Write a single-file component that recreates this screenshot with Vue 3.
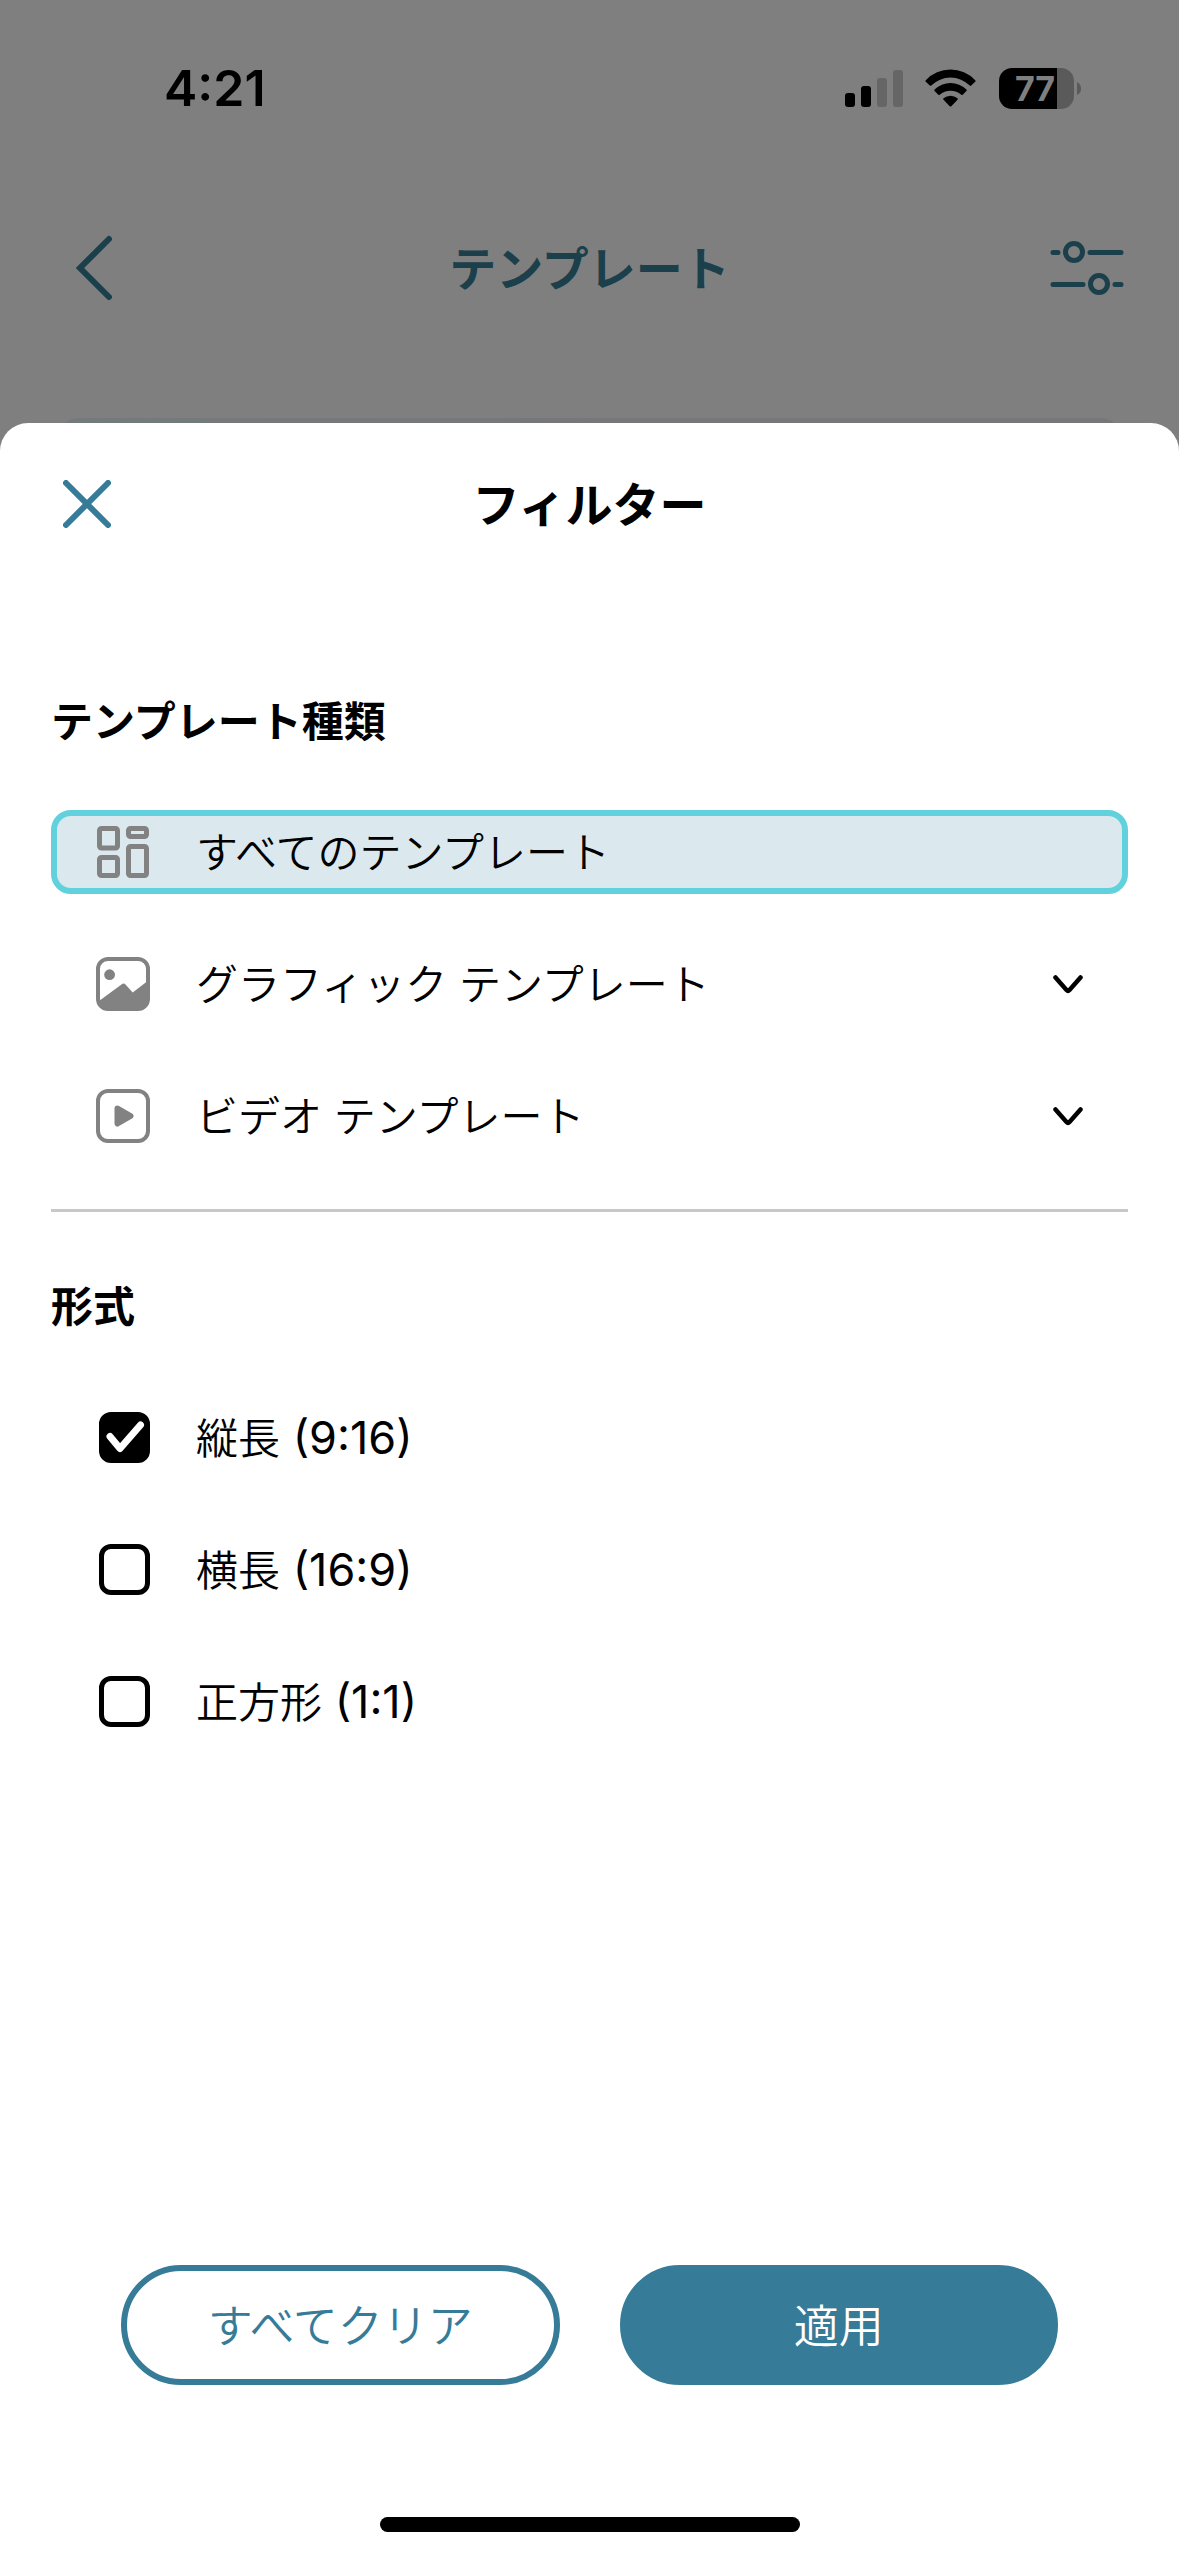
<script setup>
import { ref } from 'vue'

const kinds = [
  { id: 'all', label: 'すべてのテンプレート', expandable: false },
  { id: 'graphic', label: 'グラフィック テンプレート', expandable: true },
  { id: 'video', label: 'ビデオ テンプレート', expandable: true },
]
const selected = ref('all')

const formats = ref([
  { id: 'portrait', name: '縦長', ratio: '(9:16)', checked: true },
  { id: 'landscape', name: '横長', ratio: '(16:9)', checked: false },
  { id: 'square', name: '正方形', ratio: '(1:1)', checked: false },
])

function clearAll() {
  selected.value = 'all'
  formats.value.forEach((f) => (f.checked = false))
}
</script>

<template>
  <div class="screen">
    <div class="status">
      <span class="time">4:21</span>
      <div class="indicators">
        <svg class="signal" width="58" height="38" viewBox="0 0 58 38" aria-hidden="true">
          <rect x="0" y="24" width="10" height="14" rx="3" />
          <rect x="16" y="17" width="10" height="21" rx="3" />
          <rect x="32" y="9" width="10" height="29" rx="3" fill="#666" />
          <rect x="48" y="1" width="10" height="37" rx="3" fill="#666" />
        </svg>
        <svg class="wifi" width="52" height="38" viewBox="0 0 52 38" aria-hidden="true">
          <path d="M.8 11.200 A34 34 0 0 1 50.200 11.200 Q51 12 50.200 12.800 L46.200 16.600 Q45.500 17.200 44.800 16.600 A27.300 27.300 0 0 0 6.200 16.600 Q5.500 17.200 4.800 16.600 L.8 12.800 Q0 12 .8 11.200Z" />
          <path d="M9.600 20.600 A22.500 22.500 0 0 1 41.400 20.600 Q42.200 21.300 41.400 22 L37.700 25.700 Q37 26.300 36.300 25.700 A16.500 16.500 0 0 0 14.700 25.700 Q14 26.300 13.300 25.700 L9.600 22 Q8.800 21.300 9.600 20.600Z" />
          <path d="M18.500 29.200 A11 11 0 0 1 32.500 29.200 Q33.200 30 32.500 30.700 L26.300 37.200 Q25.500 38 24.700 37.200 L18.500 30.700 Q17.800 30 18.500 29.200Z" />
        </svg>
        <div class="battery">
          <div class="cell"><span>77</span></div>
          <svg width="4" height="13" viewBox="0 0 4 13" aria-hidden="true"><path d="M0 0 Q4 2 4 6.500 Q4 11 0 13Z" fill="#5a5a5a" /></svg>
        </div>
      </div>
    </div>

    <header class="nav">
      <button class="icon-btn back" aria-label="戻る">
        <svg width="38" height="66" viewBox="0 0 38 66"><path d="M34 4 L5 33 L34 62" fill="none" stroke="currentColor" stroke-width="6" stroke-linecap="round" stroke-linejoin="miter" /></svg>
      </button>
      <h1>テンプレート</h1>
      <button class="icon-btn" aria-label="フィルター">
        <svg width="74" height="54" viewBox="0 0 74 54" fill="none" stroke="currentColor" stroke-width="5" stroke-linecap="round">
          <path d="M3 11.500 H8 M40 11.500 H71 M3 43.500 H33 M65 43.500 H71" />
          <circle cx="24" cy="11" r="8.500" />
          <circle cx="49" cy="43" r="8.500" />
        </svg>
      </button>
    </header>

    <div class="card-edge"></div>

    <section class="sheet" role="dialog" aria-labelledby="sheet-title">
      <div class="sheet-head">
        <button class="icon-btn close" aria-label="閉じる">
          <svg width="48" height="48" viewBox="0 0 48 48"><path d="M3 3 L45 45 M45 3 L3 45" fill="none" stroke="currentColor" stroke-width="6" stroke-linecap="round" /></svg>
        </button>
        <h2 id="sheet-title">フィルター</h2>
      </div>

      <div class="body">
        <h3>テンプレート種類</h3>
        <div class="rows">
          <button
            v-for="k in kinds"
            :key="k.id"
            class="row kind"
            :class="{ active: selected === k.id }"
            @click="selected = k.id"
          >
            <span class="lead">
              <svg v-if="k.id === 'all'" width="52" height="52" viewBox="0 0 52 52" fill="none" stroke="#828282" stroke-width="5">
                <rect x="2.500" y="2.500" width="18" height="19.500" rx="2" />
                <rect x="31.500" y="2.500" width="18" height="8" rx="2" />
                <rect x="2.500" y="31.500" width="18" height="18" rx="2" />
                <rect x="31.500" y="20.500" width="18" height="29" rx="2" />
              </svg>
              <svg v-else-if="k.id === 'graphic'" width="54" height="54" viewBox="0 0 54 54">
                <rect x="2" y="2" width="50" height="50" rx="10" fill="none" stroke="#828282" stroke-width="4" />
                <circle cx="13.600" cy="17.700" r="5.400" fill="#828282" />
                <path d="M3 44 L26.500 26.800 Q28 25.800 29.300 27.200 L36.700 35.500 L51 24.500 V42 Q51 52 42 52 H12 Q3 52 3 44Z" fill="#828282" />
              </svg>
              <svg v-else width="54" height="54" viewBox="0 0 54 54">
                <rect x="2" y="2" width="50" height="50" rx="10" fill="none" stroke="#828282" stroke-width="4" />
                <path d="M21.500 19.500 L34.500 27 L21.500 34.500Z" fill="#828282" stroke="#828282" stroke-width="6" stroke-linejoin="round" />
              </svg>
            </span>
            <span class="label">{{ k.label }}</span>
            <svg v-if="k.expandable" class="chev" width="30" height="20" viewBox="0 0 30 20"><path d="M2.500 3.500 L13.500 16 Q15 17.500 16.500 16 L27.500 3.500" fill="none" stroke="#000" stroke-width="4.500" stroke-linecap="round" /></svg>
          </button>
        </div>

        <hr />

        <h3>形式</h3>
        <div class="rows">
          <label v-for="f in formats" :key="f.id" class="row" :for="f.id">
            <span class="lead check">
              <input :id="f.id" v-model="f.checked" type="checkbox" />
              <svg v-if="f.checked" width="51" height="51" viewBox="0 0 51 51"><path d="M11 24.500 L21 36.500 L41.500 13" fill="none" stroke="#fff" stroke-width="7" stroke-linecap="round" stroke-linejoin="round" /></svg>
            </span>
            <span class="label">{{ f.name }}<span class="ratio">{{ ' ' + f.ratio }}</span></span>
          </label>
        </div>
      </div>

      <div class="actions">
        <button class="pill outline" @click="clearAll">すべてクリア</button>
        <button class="pill solid">適用</button>
      </div>
      <div class="home"></div>
    </section>
  </div>
</template>

<style>
body {
  margin: 0;
  background: #7f7f7f;
}
</style>

<style scoped>
* {
  box-sizing: border-box;
}

.screen {
  display: flex;
  flex-direction: column;
  min-height: 100vh;
  background: #7f7f7f;
  color: #000;
  font-family: Inter, 'Noto Sans CJK JP', sans-serif;
}

button {
  margin: 0;
  padding: 0;
  border: 0;
  background: none;
  color: inherit;
  font: inherit;
  cursor: pointer;
}

svg {
  display: block;
  flex: none;
}

h1,
h2,
h3 {
  margin: 0;
  font-weight: 700;
}

/* status bar */
.status {
  display: flex;
  justify-content: space-between;
  align-items: center;
  height: 176px;
  padding: 0 98px 0 164px;
}

.time {
  font-size: 50px;
  font-weight: 600;
}

.indicators {
  display: flex;
  align-items: center;
  gap: 22px;
}

.battery {
  display: flex;
  align-items: center;
  gap: 3px;
}

.cell {
  display: flex;
  align-items: center;
  justify-content: center;
  width: 75px;
  height: 41px;
  padding-right: 3px;
  border-radius: 13px;
  background: linear-gradient(to right, #000 58px, #5a5a5a 58px);
  color: #7f7f7f;
  font-size: 34px;
  font-weight: 700;
  line-height: 41px;
}

/* dimmed page behind the sheet */
.nav {
  display: grid;
  grid-template-columns: 1fr auto 1fr;
  align-items: center;
  height: 184px;
  padding: 0 55px;
  color: #1b404b;
}

.nav .icon-btn {
  display: flex;
  justify-self: end;
}

.nav .back {
  justify-self: start;
  padding-left: 20px;
}

.nav h1,
.sheet-head h2 {
  padding-bottom: 6px;
  font-size: 47px;
}

.card-edge {
  height: 32px;
  margin: 58px 58px -27px;
  border-radius: 20px 20px 0 0;
  background: linear-gradient(to right, #747a7b, #77777a 50%);
}

/* sheet */
.sheet {
  display: flex;
  flex: 1;
  flex-direction: column;
  border-radius: 28px 28px 0 0;
  background: #fff;
}

.sheet-head {
  display: grid;
  grid-template-columns: 48px 1fr 48px;
  align-items: center;
  height: 162px;
  padding: 0 63px;
}

.close {
  color: #367b97;
}

.sheet-head h2 {
  text-align: center;
}

.body {
  padding: 105px 51px 0;
}

h3 {
  padding-top: 2px;
  font-size: 42px;
  line-height: 60px;
}

.rows {
  display: flex;
  flex-direction: column;
  gap: 48px;
  margin-top: 58px;
}

.row {
  display: flex;
  align-items: center;
  width: 100%;
  height: 84px;
  padding: 0 45px;
  font-size: 42px;
  line-height: 60px;
  text-align: left;
}

.kind {
  padding: 0 39px;
  border: 6px solid transparent;
  border-radius: 20px;
}

.kind.active {
  border-color: #61d2dd;
  background: #dbe9ee;
}

.lead {
  display: flex;
  justify-content: center;
  width: 54px;
  margin-right: 46px;
}

.label {
  flex: 1;
  padding-top: 2px;
  font-weight: 350;
}

.ratio {
  font-size: 45px;
  font-weight: 400;
}

.check {
  display: grid;
  justify-content: end;
}

.check > * {
  grid-area: 1 / 1;
  pointer-events: none;
}

.check input {
  width: 51px;
  height: 51px;
  margin: 0;
  border: 5px solid #000;
  border-radius: 12px;
  background: #fff;
  appearance: none;
}

.check input:checked {
  background: #000;
}

hr {
  height: 3px;
  margin: 51px 0 63px;
  border: 0;
  background: #c5c9cb;
}

.actions {
  display: flex;
  gap: 60px;
  margin-top: auto;
  padding: 60px 121px 132px;
}

.pill {
  flex: 1;
  height: 120px;
  padding-bottom: 4px;
  border: 6px solid #367b97;
  border-radius: 60px;
  font-size: 45px;
  font-weight: 350;
}

.outline {
  color: #367b97;
}

.solid {
  background: #367b97;
  color: #fff;
}

.home {
  align-self: center;
  width: 420px;
  height: 15px;
  margin-bottom: 24px;
  border-radius: 8px;
  background: #000;
}
</style>
